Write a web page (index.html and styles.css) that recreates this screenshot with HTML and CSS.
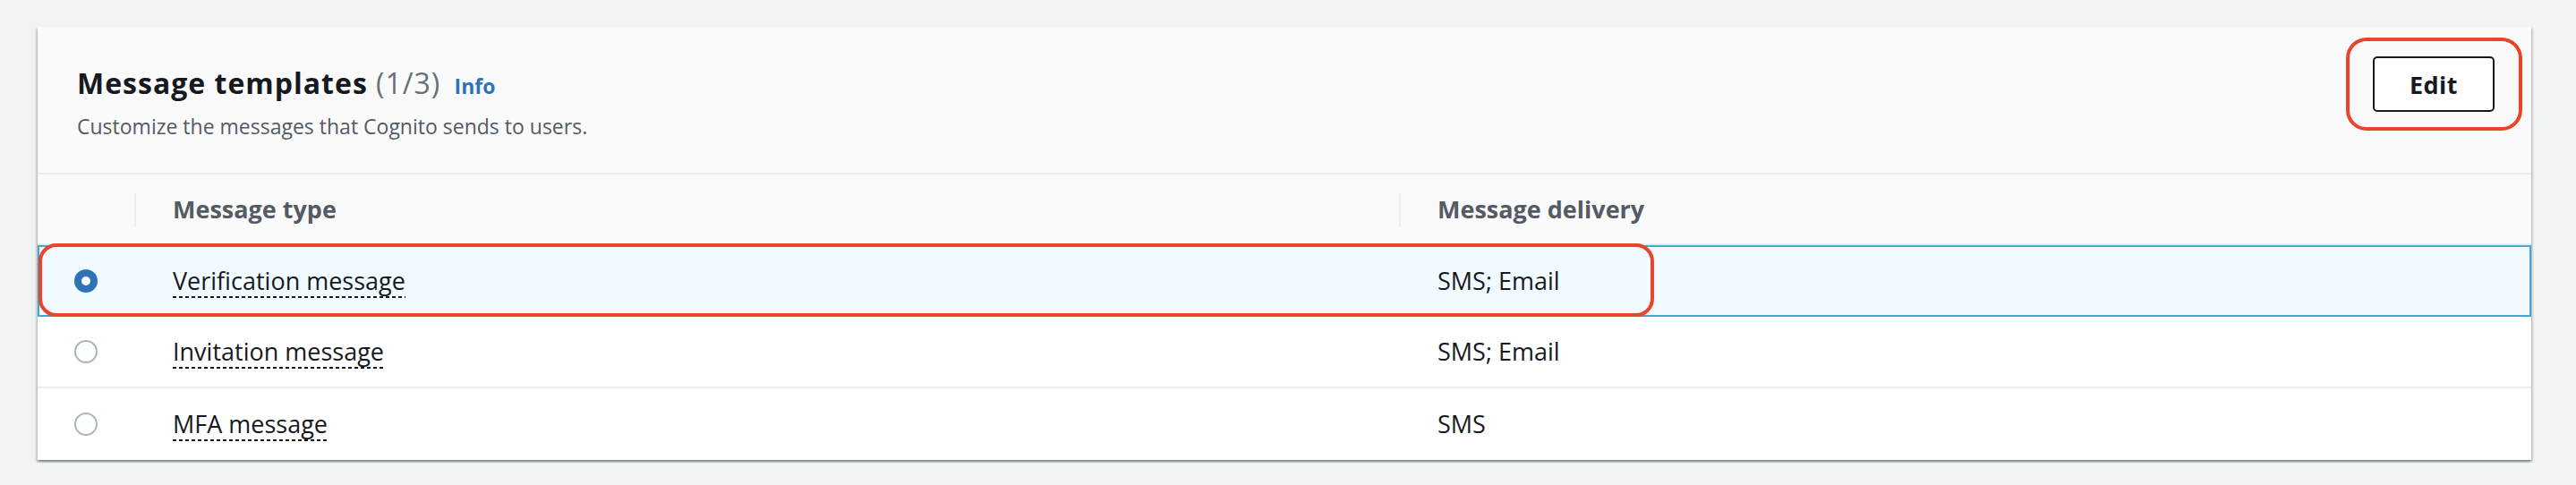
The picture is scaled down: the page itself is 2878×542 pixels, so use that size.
FILE: index.html
```html
<!DOCTYPE html>
<html lang="en">
<head>
<meta charset="utf-8">
<title>Message templates</title>
<link rel="stylesheet" href="styles.css">
</head>
<body>
<section class="card">
  <header class="card-header">
    <div class="heading">
      <h2 class="title">Message templates <span class="count">(1/3)</span> <a class="info" href="#">Info</a></h2>
      <p class="desc">Customize the messages that Cognito sends to users.</p>
    </div>
    <div class="actions">
      <button class="btn" type="button">Edit</button>
      <span class="callout callout-edit"></span>
    </div>
  </header>
  <div class="table">
    <div class="row head">
      <div class="cell sel"></div>
      <div class="cell col"><span class="sep"></span>Message type</div>
      <div class="cell col"><span class="sep"></span>Message delivery</div>
    </div>
    <div class="row body selected">
      <div class="cell sel"><span class="radio checked"></span></div>
      <div class="cell col"><span class="dotted">Verification message</span></div>
      <div class="cell col">SMS; Email</div>
      <span class="callout callout-row"></span>
    </div>
    <div class="row body divided">
      <div class="cell sel"><span class="radio"></span></div>
      <div class="cell col"><span class="dotted">Invitation message</span></div>
      <div class="cell col">SMS; Email</div>
    </div>
    <div class="row body">
      <div class="cell sel"><span class="radio"></span></div>
      <div class="cell col"><span class="dotted">MFA message</span></div>
      <div class="cell col">SMS</div>
    </div>
  </div>
</section>
</body>
</html>
```
FILE: styles.css
```css
* { box-sizing: border-box; }

html, body {
  margin: 0;
  padding: 0;
  background: #f2f3f3;
}

body {
  font-family: "Open Sans", "Noto Sans", sans-serif;
  color: #16191f;
  padding: 30px 50px 28px 42px;
}

.card {
  background: #ffffff;
  box-shadow: 0 2px 2px rgba(0, 28, 36, 0.3), 2px 2px 2px rgba(0, 28, 36, 0.15), -2px 2px 2px rgba(0, 28, 36, 0.15);
}

.card-header {
  display: flex;
  justify-content: space-between;
  align-items: flex-start;
  height: 165px;
  padding: 33px 41px 0 44px;
  background: #fafafa;
  border-bottom: 2px solid #eaeded;
}

.title {
  margin: 10px 0 0;
  font-size: 32px;
  line-height: 40px;
  font-weight: 700;
  letter-spacing: 1px;
  color: #16191f;
}

.count {
  font-weight: 400;
  color: #687078;
}

.info {
  margin-left: 6px;
  font-size: 23px;
  font-weight: 700;
  letter-spacing: 0;
  color: #2e73b8;
  text-decoration: none;
}

.desc {
  margin: 10px 0 0;
  font-size: 23px;
  line-height: 30px;
  color: #545b64;
}

.actions {
  position: relative;
}

.btn {
  display: block;
  width: 136px;
  height: 62px;
  padding: 0;
  background: #ffffff;
  border: 2px solid #16191f;
  border-radius: 5px;
  font-family: inherit;
  font-size: 27px;
  font-weight: 700;
  letter-spacing: 0.5px;
  color: #16191f;
}

.callout {
  position: absolute;
  border: 4px solid #e8452c;
  pointer-events: none;
}

.callout-edit {
  top: -21px;
  bottom: -21px;
  left: -30px;
  right: -31px;
  border-radius: 23px;
}

.row {
  display: grid;
  grid-template-columns: 108px 1413px 1fr;
  align-items: center;
  position: relative;
}

.row.head {
  height: 79px;
  background: #fafafa;
  border-bottom: 2px solid #eaeded;
  font-size: 27px;
  font-weight: 700;
  color: #545b64;
}

.row.body {
  height: 80px;
  font-size: 27px;
  color: #16191f;
  background: #ffffff;
}

.row.selected {
  background: #f1faff;
  box-shadow: inset 0 0 0 2px #44a6d1;
}

.row.divided {
  border-bottom: 2px solid #eaeded;
}

.cell {
  line-height: 36px;
  white-space: nowrap;
}

.cell.col {
  position: relative;
  padding-left: 43px;
}

.sep {
  position: absolute;
  left: 0;
  top: 50%;
  width: 2px;
  height: 37px;
  margin-top: -18px;
  background: #eaeded;
}

.cell.sel {
  display: flex;
  align-items: center;
  padding-left: 41px;
}

.radio {
  display: block;
  width: 26px;
  height: 26px;
  border-radius: 50%;
  border: 2px solid #aab7b8;
  background: #ffffff;
}

.radio.checked {
  border: 8px solid #2e73b8;
  background: #ffffff;
}

.dotted {
  padding-bottom: 1px;
  background-image: repeating-linear-gradient(to right, #16191f 0 4px, transparent 4px 7px);
  background-size: 100% 2px;
  background-position: left bottom;
  background-repeat: no-repeat;
}

.callout-row {
  top: -2px;
  left: 1px;
  width: 1805px;
  height: 82px;
  border-radius: 20px;
}
```
